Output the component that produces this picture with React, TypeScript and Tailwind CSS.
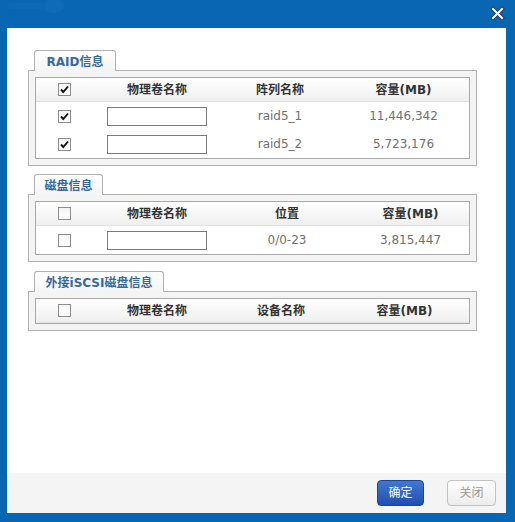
import React from "react";

type Col = { label: string; w: number };

const FONT = { fontFamily: '"DejaVu Sans", "Noto Sans CJK SC", sans-serif' };

function Check({ checked }: { checked: boolean }) {
  return (
    <span className="inline-flex w-[13px] h-[13px] border border-[#8c8c8c] bg-gradient-to-b from-[#f4f4f4] to-white items-center justify-center">
      {checked && (
        <svg width="11" height="11" viewBox="0 0 11 11">
          <path d="M2 5.5 L4.3 8 L9 2.5" fill="none" stroke="#111" strokeWidth="1.9" />
        </svg>
      )}
    </span>
  );
}

function Section({
  tab,
  tabW,
  cols,
  rows,
  className,
}: {
  tab: string;
  tabW: number;
  cols: Col[];
  rows: { checked: boolean; a: string; b: string }[];
  className?: string;
}) {
  return (
    <div className={"w-[449px] " + (className ?? "")}>
      <div
        className="ml-[6px] relative z-10 -mb-px h-[21px] border border-b-0 border-[#b0b0b0] rounded-t-[3px] bg-gradient-to-b from-white to-[#f4f4f4] flex items-center justify-center text-[12px] font-bold text-[#35699c] leading-none pt-[1px]"
        style={{ width: tabW }}
      >
        {tab}
      </div>
      <div className="border border-[#b0b0b0] bg-[#f4f4f4] p-[6px]">
        <div className="border border-[#a8a8a8] bg-white">
          <div className="flex h-[24px] items-center bg-gradient-to-b from-white to-[#efefef] border-b border-[#e2e2e2] text-[12px] font-bold text-[#333]">
            {cols.map((c, i) => (
              <div key={i} className="flex justify-center items-center" style={{ width: c.w }}>
                {i === 0 ? <Check checked={rows.length > 0 && rows.every((r) => r.checked)} /> : c.label}
              </div>
            ))}
          </div>
          {rows.map((r, ri) => (
            <div key={ri} className="flex h-[28px] items-center text-[12px] text-[#707070]">
              <div className="flex justify-center" style={{ width: cols[0].w }}>
                <Check checked={r.checked} />
              </div>
              <div className="flex justify-center" style={{ width: cols[1].w }}>
                <span className="block w-[100px] h-[19px] border border-[#7a7a7a] bg-white" />
              </div>
              <div className="flex justify-center" style={{ width: cols[2].w }}>
                {r.a}
              </div>
              <div className="flex justify-center" style={{ width: cols[3].w }}>
                {r.b}
              </div>
            </div>
          ))}
        </div>
      </div>
    </div>
  );
}

export default function App() {
  return (
    <div className="w-[515px] h-[522px] bg-[#0866b3] flex flex-col" style={FONT}>
      <div className="h-[28px] relative shrink-0">
        <svg className="absolute left-[2px] top-0 opacity-15" width="70" height="16" viewBox="0 0 70 16">
          <ellipse cx="52" cy="6" rx="10" ry="7" fill="#3a8ad0" />
          <rect x="6" y="3" width="36" height="6" rx="3" fill="#2a80c8" />
        </svg>
        <svg className="absolute left-[490px] top-[6px]" width="15" height="15" viewBox="0 0 15 15">
          <path d="M3 3 L12 12 M12 3 L3 12" stroke="#1b3f6a" strokeWidth="4" strokeLinecap="square" />
          <path d="M3 3 L12 12 M12 3 L3 12" stroke="#fff" strokeWidth="2" strokeLinecap="square" />
        </svg>
      </div>
      <div className="flex-1 ml-[7px] mr-[9px] mb-[9px] bg-white flex flex-col">
        <div className="flex-1 pt-[22px] pl-[21px] flex flex-col">
          <Section
            tab="RAID信息"
            tabW={82}
            cols={[
              { label: "", w: 56 },
              { label: "物理卷名称", w: 130 },
              { label: "阵列名称", w: 116 },
              { label: "容量(MB)", w: 131 },
            ]}
            rows={[
              { checked: true, a: "raid5_1", b: "11,446,342" },
              { checked: true, a: "raid5_2", b: "5,723,176" },
            ]}
          />
          <Section
            className="mt-[8px]"
            tab="磁盘信息"
            tabW={69}
            cols={[
              { label: "", w: 56 },
              { label: "物理卷名称", w: 130 },
              { label: "位置", w: 130 },
              { label: "容量(MB)", w: 117 },
            ]}
            rows={[{ checked: false, a: "0/0-23", b: "3,815,447" }]}
          />
          <Section
            className="mt-[9px]"
            tab="外接iSCSI磁盘信息"
            tabW={130}
            cols={[
              { label: "", w: 56 },
              { label: "物理卷名称", w: 130 },
              { label: "设备名称", w: 118 },
              { label: "容量(MB)", w: 129 },
            ]}
            rows={[]}
          />
        </div>
        <div className="h-[40px] shrink-0 bg-[#f4f4f4] flex justify-end items-start pt-[7px] pr-[10px] gap-[23px]">
          <button className="w-[47px] h-[26px] rounded-[4px] border border-[#1c4597] bg-gradient-to-b from-[#4277d2] to-[#1f4fae] text-white text-[12px] flex items-center justify-center">
            确定
          </button>
          <button className="w-[49px] h-[26px] rounded-[4px] border border-[#c2c2c2] bg-gradient-to-b from-white to-[#ececec] text-[#999] text-[12px] flex items-center justify-center">
            关闭
          </button>
        </div>
      </div>
    </div>
  );
}
